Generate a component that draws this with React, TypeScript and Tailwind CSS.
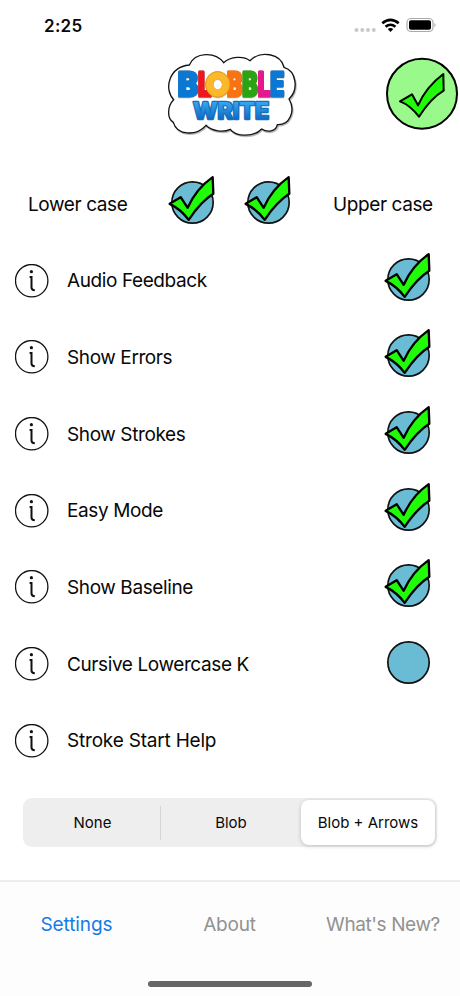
import React, { useState } from 'react';

interface LogoLetter {
  char: string;
  x: number;
  color: string;
  width: number;
}

const LOGO_LETTERS: LogoLetter[] = [
  { char: 'B', x: 53, color: '#0b78d4', width: 61 },
  { char: 'L', x: 114, color: '#ee1620', width: 40 },
  { char: 'B', x: 200, color: '#fb7311', width: 47 },
  { char: 'B', x: 247, color: '#2aa512', width: 46 },
  { char: 'L', x: 293, color: '#e5188f', width: 38 },
  { char: 'E', x: 331, color: '#0b78d4', width: 42 },
];

const CLOUD =
  'M88 45C105 6 165 4 191 38C212 19 250 17 270 32C302 0 362 10 372 52C409 63 417 119 387 147C408 182 389 226 352 224C348 247 320 247 305 237C280 263 226 260 211 238C190 248 156 244 138 226C109 259 51 257 40 217C20 205 22 168 41 149C11 118 26 51 88 45Z';

const OPTIONS = [
  { label: 'Audio Feedback', checked: true },
  { label: 'Show Errors', checked: true },
  { label: 'Show Strokes', checked: true },
  { label: 'Easy Mode', checked: true },
  { label: 'Show Baseline', checked: true },
  { label: 'Cursive Lowercase K', checked: false },
];

const Logo: React.FC = () => (
  <svg viewBox="0 0 420 270" className="h-[90px] w-[140px]" fontFamily="Inter, sans-serif" fontWeight="800">
    <defs>
      <linearGradient id="write" x1="0" y1="0" x2="0" y2="1">
        <stop offset="0.2" stopColor="#35a4ee" />
        <stop offset="0.9" stopColor="#0a61bd" />
      </linearGradient>
    </defs>
    <path d={CLOUD} fill="#bbb" stroke="#bbb" strokeWidth="4" transform="translate(3 4)" />
    <path d={CLOUD} fill="#fff" stroke="#151515" strokeWidth="4" />
    <g className="drop-shadow-[0_1px_1px_rgba(60,40,0,0.6)]">
      {LOGO_LETTERS.map((l, i) => (
        <text
          key={i}
          x={l.x}
          y="138"
          fontSize="96"
          textLength={l.width}
          lengthAdjust="spacingAndGlyphs"
          fill={l.color}
          stroke={l.color}
          strokeWidth="9"
          strokeLinejoin="round"
        >
          {l.char}
        </text>
      ))}
      <ellipse cx="173" cy="103" rx="25" ry="27" fill="none" stroke="#fbb829" strokeWidth="24" />
      <ellipse cx="173" cy="103" rx="36" ry="38" fill="none" stroke="#dd9420" strokeWidth="2" />
    </g>
    <text
      x="99"
      y="208"
      fontSize="67"
      textLength="228"
      lengthAdjust="spacingAndGlyphs"
      fill="url(#write)"
      stroke="#176fb8"
      strokeWidth="7"
      strokeLinejoin="round"
      paintOrder="stroke"
    >
      WRITE
    </text>
  </svg>
);

const CheckIcon: React.FC<{ checked?: boolean }> = ({ checked = true }) => (
  <svg viewBox="0 17.5 180 180" className="size-[60px] shrink-0 overflow-visible">
    <circle cx="85.5" cy="103" r="62" fill="#69bcd3" stroke="#111" strokeWidth="5" />
    {checked && (
      <path
        d="M17 107L50 87L71 119Q96 62 146 27L148 77Q111 100 74 155Q50 123 17 107Z"
        fill="#20fb08"
        stroke="#000"
        strokeWidth="7"
        strokeLinejoin="round"
      />
    )}
  </svg>
);

const InfoIcon: React.FC = () => (
  <svg viewBox="0 0 34 34" className="size-[34px] shrink-0" fill="none" stroke="#111">
    <circle cx="16.7" cy="16.7" r="16.2" strokeWidth="1.3" />
    <circle cx="16.4" cy="7.7" r="1.6" fill="#111" stroke="none" />
    <path d="M14.6 13H16.5V23.4Q16.5 26 19.8 26.2" strokeWidth="2" />
  </svg>
);

const StatusBar: React.FC = () => (
  <div className="flex h-[50px] items-center pl-[44px] pr-[20px]">
    <span className="mt-[3px] text-[17px] font-semibold tracking-[0.3px]">2:25</span>
    <svg viewBox="0 0 90 20" className="ml-auto h-[20px] w-[90px]">
      <g fill="#c9c9c9">
        <circle cx="6.5" cy="15" r="2" />
        <circle cx="12.3" cy="15" r="2" />
        <circle cx="18" cy="15" r="2" />
        <circle cx="23.8" cy="15" r="2" />
      </g>
      <g fill="none" stroke="#000" strokeWidth="2.6">
        <path d="M32.3 8.2Q40.5 1.4 48.7 8.2" />
        <path d="M35.5 11.8Q40.5 7.7 45.5 11.8" />
      </g>
      <path d="M37.7 14.1Q40.5 12 43.3 14.1L40.5 17Z" />
      <rect x="57" y="3.5" width="26" height="13" rx="4" fill="#fff" stroke="#aaa" strokeWidth="1.2" />
      <rect x="59" y="5.3" width="22" height="9.5" rx="2" />
      <path d="M84.5 8Q86.5 10 84.5 12Z" fill="#999" />
    </svg>
  </div>
);

const App: React.FC = () => {
  const [segment, setSegment] = useState('Blob + Arrows');

  return (
    <div className="flex h-[996px] w-[460px] flex-col overflow-hidden bg-white font-['Inter',sans-serif] text-[19px] tracking-[-0.4px] text-[#080808]">
      <StatusBar />

      <header className="flex h-[115.5px] items-start">
        <div className="ml-[160px]">
          <Logo />
        </div>
        <button className="ml-[80px]">
          <svg viewBox="0 0 240 255" className="h-[85px] w-[80px]">
            <circle cx="126" cy="131" r="105" fill="#99fa8b" stroke="#000" strokeWidth="6" />
            <path
              d="M60 154L96 133L114 166Q139 110 190 72L191 122Q153 144 117 200Q90 165 60 154Z"
              fill="#20fb08"
              stroke="#000"
              strokeWidth="6"
              strokeLinejoin="round"
            />
          </svg>
        </button>
      </header>

      <div className="flex h-[76.7px] items-center pl-[28px]">
        <span className="mt-[2px] w-[136px] whitespace-nowrap">Lower case</span>
        <div className="flex gap-4">
          <CheckIcon />
          <CheckIcon />
        </div>
        <span className="ml-[33px] mt-[2px] whitespace-nowrap">Upper case</span>
      </div>

      {OPTIONS.map((option) => (
        <div key={option.label} className="flex h-[76.7px] items-center pl-[15px] pr-[20px]">
          <InfoIcon />
          <span className="ml-[18px] mt-[2px] flex-1">{option.label}</span>
          <CheckIcon checked={option.checked} />
        </div>
      ))}
      <div className="flex h-[76.7px] items-center pl-[15px]">
        <InfoIcon />
        <span className="ml-[18px] mt-[2px] tracking-[-0.2px]">Stroke Start Help</span>
      </div>

      <div className="mx-[23px] mt-[19px] flex h-[49px] shrink-0 items-center rounded-[9px] bg-[#eeeeef] p-[2px] text-[15px] tracking-normal">
        {['None', 'Blob', 'Blob + Arrows'].map((name, i) => (
          <React.Fragment key={name}>
            {i === 1 && <div className="h-[34px] w-px bg-[#d5d5d7]" />}
            <button
              onClick={() => setSegment(name)}
              className={`h-[45px] rounded-[8px] pt-[2px] ${i === 0 ? 'w-[135px]' : i === 2 ? 'w-[134px]' : 'flex-1'} ${
                segment === name ? 'bg-white shadow-[0_1px_4px_rgba(0,0,0,0.2)]' : ''
              }`}
            >
              {name}
            </button>
          </React.Fragment>
        ))}
      </div>

      <footer className="mt-auto flex h-[116px] shrink-0 flex-col border-t-2 border-[#ededed] bg-[#fdfdfd]">
        <nav className="flex h-[86px] items-center text-[#929292]">
          <button className="w-[153px] tracking-[-0.1px] text-[#147ce5]">Settings</button>
          <button className="w-[153px] tracking-[-0.2px]">About</button>
          <button className="w-[154px] whitespace-nowrap">What's New?</button>
        </nav>
        <div className="mx-auto mt-[13px] h-[6px] w-[164px] rounded-full bg-[#666]" />
      </footer>
    </div>
  );
};

export default App;
